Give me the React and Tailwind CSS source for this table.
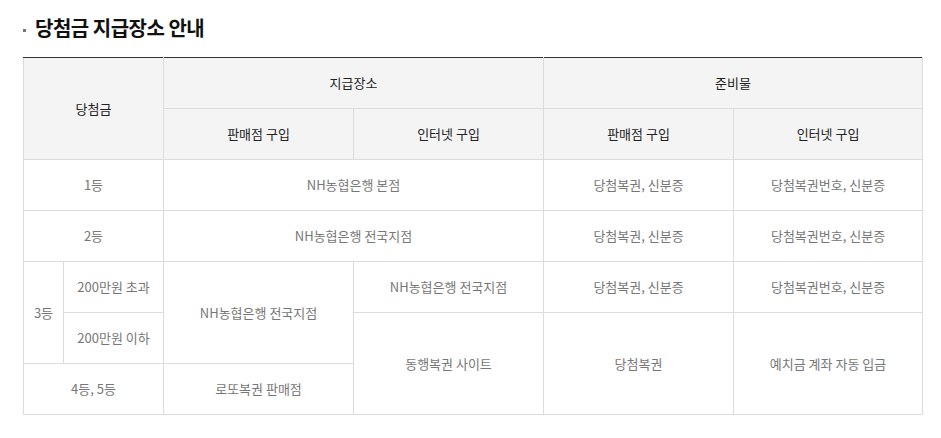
import React from 'react';

const th = "border border-[#dcdcdc] bg-[#f4f4f4] text-[13px] font-normal text-[#222] h-[51px] p-0";
const td = "border border-[#dcdcdc] text-[13px] text-[#777] h-[51px] p-0 text-center";

const App = () => {
  return (
    <div className="bg-white w-[941px] h-[438px] pl-[23px] pr-[18px] pt-[14px]" style={{ fontFamily: '"Noto Sans CJK KR", "Noto Sans", sans-serif' }}>
      {/* title */}
      <div className="flex items-center h-[28px]">
        <span className="w-[3px] h-[3px] bg-[#777] mr-[9px] mt-[4px]" />
        <h2 className="text-[20px] font-bold text-[#111] leading-none tracking-[-0.5px]">당첨금 지급장소 안내</h2>
      </div>

      <table className="mt-[15px] w-[899px] table-fixed border-collapse border-t border-t-[#333]">
        <colgroup>
          <col className="w-[40px]" />
          <col className="w-[100px]" />
          <col className="w-[190px]" />
          <col className="w-[190px]" />
          <col className="w-[190px]" />
          <col className="w-[189px]" />
        </colgroup>
        <thead>
          <tr>
            <th rowSpan={2} colSpan={2} className={th + " border-t-[#333]"}>당첨금</th>
            <th colSpan={2} className={th + " border-t-[#333]"}>지급장소</th>
            <th colSpan={2} className={th + " border-t-[#333]"}>준비물</th>
          </tr>
          <tr>
            <th className={th}>판매점 구입</th>
            <th className={th}>인터넷 구입</th>
            <th className={th}>판매점 구입</th>
            <th className={th}>인터넷 구입</th>
          </tr>
        </thead>
        <tbody>
          <tr>
            <td colSpan={2} className={td}>1등</td>
            <td colSpan={2} className={td}>NH농협은행 본점</td>
            <td className={td}>당첨복권, 신분증</td>
            <td className={td}>당첨복권번호, 신분증</td>
          </tr>
          <tr>
            <td colSpan={2} className={td}>2등</td>
            <td colSpan={2} className={td}>NH농협은행 전국지점</td>
            <td className={td}>당첨복권, 신분증</td>
            <td className={td}>당첨복권번호, 신분증</td>
          </tr>
          <tr>
            <td rowSpan={2} className={td}>3등</td>
            <td className={td}>200만원 초과</td>
            <td rowSpan={2} className={td}>NH농협은행 전국지점</td>
            <td className={td}>NH농협은행 전국지점</td>
            <td className={td}>당첨복권, 신분증</td>
            <td className={td}>당첨복권번호, 신분증</td>
          </tr>
          <tr>
            <td className={td}>200만원 이하</td>
            <td rowSpan={2} className={td}>동행복권 사이트</td>
            <td rowSpan={2} className={td}>당첨복권</td>
            <td rowSpan={2} className={td}>예치금 계좌 자동 입금</td>
          </tr>
          <tr>
            <td colSpan={2} className={td}>4등, 5등</td>
            <td className={td}>로또복권 판매점</td>
          </tr>
        </tbody>
      </table>
    </div>
  );
};

export default App;
